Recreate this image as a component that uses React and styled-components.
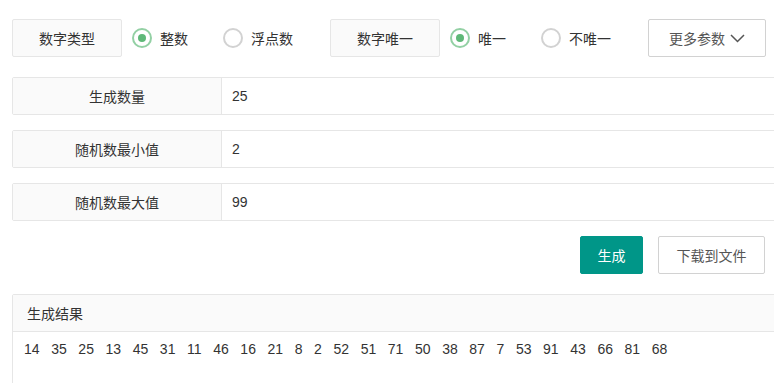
import React, { useState } from "react";
import styled, { createGlobalStyle } from "styled-components";

const GlobalStyle = createGlobalStyle`
  html, body {
    margin: 0;
    padding: 0;
    background: #ffffff;
    overflow: hidden;
  }
  body {
    font-family: "Liberation Sans", "Noto Sans CJK SC", Arial, sans-serif;
    font-size: 14px;
    color: #333333;
  }
`;

const Page = styled.div`
  width: 753px;
  padding: 19px 0 0 12px;
`;

const Toolbar = styled.div`
  display: flex;
  align-items: center;
  height: 38px;
  white-space: nowrap;

  & > * {
    flex-shrink: 0;
  }
`;

const LabelBox = styled.div`
  box-sizing: border-box;
  width: 110px;
  height: 38px;
  display: flex;
  align-items: center;
  justify-content: center;
  background: #fafafa;
  border: 1px solid #e6e6e6;
  border-radius: 2px;
  color: #333;
  margin-left: ${(p) => (p.$first ? "0" : "37px")};
`;

const RadioOption = styled.label`
  display: flex;
  align-items: center;
  margin-left: ${(p) => (p.$first ? "10px" : "35px")};
  cursor: pointer;
  color: #333;
`;

const RadioCircle = styled.span`
  box-sizing: border-box;
  width: 20px;
  height: 20px;
  border-radius: 50%;
  border: 2px solid ${(p) => (p.$checked ? "#93d0a4" : "#d2d2d2")};
  display: flex;
  align-items: center;
  justify-content: center;
  margin-right: 8px;

  &::after {
    content: "";
    width: 8px;
    height: 8px;
    border-radius: 50%;
    background: #5fb878;
    display: ${(p) => (p.$checked ? "block" : "none")};
  }
`;

const MoreButton = styled.button`
  box-sizing: border-box;
  margin-left: 37px;
  width: 118px;
  height: 38px;
  display: flex;
  align-items: center;
  justify-content: center;
  gap: 5px;
  background: #fff;
  border: 1px solid #d2d2d2;
  border-radius: 2px;
  color: #555;
  font: inherit;
  padding: 0;
  cursor: pointer;

  svg {
    display: block;
  }
`;

const FieldList = styled.div`
  margin-top: 20px;
  margin-right: -40px;
  display: flex;
  flex-direction: column;
  gap: 15px;
`;

const FieldRow = styled.div`
  box-sizing: border-box;
  display: flex;
  height: 38px;
  border: 1px solid #e6e6e6;
  border-radius: 2px;
`;

const FieldLabel = styled.div`
  box-sizing: border-box;
  width: 209px;
  flex-shrink: 0;
  display: flex;
  align-items: center;
  justify-content: center;
  background: #fafafa;
  border-right: 1px solid #e6e6e6;
  color: #333;
`;

const FieldInput = styled.input`
  flex: 1;
  border: none;
  outline: none;
  padding: 0 10px;
  font: inherit;
  color: #333;
  background: #fff;
`;

const Actions = styled.div`
  margin-top: 15px;
  display: flex;
  justify-content: flex-end;
  gap: 15px;
`;

const Button = styled.button`
  box-sizing: border-box;
  height: 38px;
  width: ${(p) => (p.$primary ? "63px" : "107px")};
  padding: 0;
  border-radius: 2px;
  font: inherit;
  cursor: pointer;
  background: ${(p) => (p.$primary ? "#009688" : "#fff")};
  color: ${(p) => (p.$primary ? "#fff" : "#555")};
  border: 1px solid ${(p) => (p.$primary ? "#009688" : "#d2d2d2")};
`;

const ResultPanel = styled.div`
  margin-top: 20px;
  margin-right: -40px;
  border: 1px solid #e6e6e6;
  border-radius: 2px;
  height: 120px;
`;

const ResultHeader = styled.div`
  height: 36px;
  display: flex;
  align-items: center;
  padding: 0 14px;
  background: #fafafa;
  border-bottom: 1px solid #e6e6e6;
  color: #333;
`;

const ResultBody = styled.div`
  padding: 7px 11px;
  display: flex;
  flex-wrap: wrap;
  column-gap: 11.6px;
  line-height: 20px;
  color: #333;
`;

const Chevron = () => (
  <svg width="15" height="9" viewBox="0 0 15 9" aria-hidden="true">
    <path d="M1 1l6.5 6.5L14 1" fill="none" stroke="#555" strokeWidth="1.5" />
  </svg>
);

const Radio = ({ checked, first, label, onSelect }) => (
  <RadioOption $first={first} onClick={onSelect}>
    <RadioCircle $checked={checked} />
    {label}
  </RadioOption>
);

const numbers = [
  14, 35, 25, 13, 45, 31, 11, 46, 16, 21, 8, 2, 52, 51, 71, 50, 38, 87, 7, 53,
  91, 43, 66, 81, 68,
];

export default function App() {
  const [numType, setNumType] = useState("int");
  const [unique, setUnique] = useState(true);

  return (
    <>
      <GlobalStyle />
      <Page>
        <Toolbar>
          <LabelBox $first>数字类型</LabelBox>
          <Radio first checked={numType === "int"} label="整数" onSelect={() => setNumType("int")} />
          <Radio checked={numType === "float"} label="浮点数" onSelect={() => setNumType("float")} />
          <LabelBox>数字唯一</LabelBox>
          <Radio first checked={unique} label="唯一" onSelect={() => setUnique(true)} />
          <Radio checked={!unique} label="不唯一" onSelect={() => setUnique(false)} />
          <MoreButton>
            更多参数
            <Chevron />
          </MoreButton>
        </Toolbar>

        <FieldList>
          <FieldRow>
            <FieldLabel>生成数量</FieldLabel>
            <FieldInput defaultValue="25" />
          </FieldRow>
          <FieldRow>
            <FieldLabel>随机数最小值</FieldLabel>
            <FieldInput defaultValue="2" />
          </FieldRow>
          <FieldRow>
            <FieldLabel>随机数最大值</FieldLabel>
            <FieldInput defaultValue="99" />
          </FieldRow>
        </FieldList>

        <Actions>
          <Button $primary>生成</Button>
          <Button>下载到文件</Button>
        </Actions>

        <ResultPanel>
          <ResultHeader>生成结果</ResultHeader>
          <ResultBody>
            {numbers.map((n, i) => (
              <span key={i}>{n}</span>
            ))}
          </ResultBody>
        </ResultPanel>
      </Page>
    </>
  );
}
